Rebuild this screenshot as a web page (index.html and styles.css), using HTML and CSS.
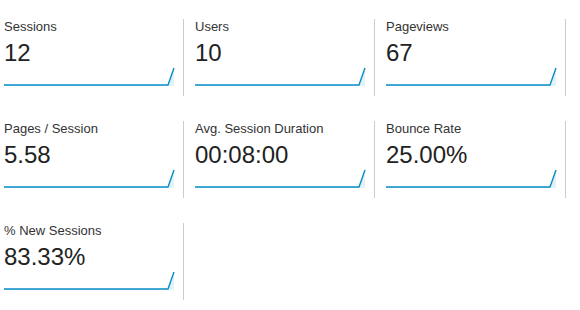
FILE: index.html
```html
<!DOCTYPE html>
<html lang="en">
<head>
    <meta charset="UTF-8">
    <meta name="viewport" content="width=device-width, initial-scale=1.0">
    <title>Audience Overview</title>
    <link rel="stylesheet" href="styles.css">
</head>
<body>
    <div class="metrics">
        <div class="metric">
            <div class="label">Sessions</div>
            <div class="value">12</div>
            <svg class="spark" viewBox="0 0 170 20"><path class="area" d="M0 18 H164 L170 1 V19 H0 Z"/><path class="line" d="M0 18 H164 L170 1"/></svg>
        </div>
        <div class="metric">
            <div class="label">Users</div>
            <div class="value">10</div>
            <svg class="spark" viewBox="0 0 170 20"><path class="area" d="M0 18 H164 L170 1 V19 H0 Z"/><path class="line" d="M0 18 H164 L170 1"/></svg>
        </div>
        <div class="metric">
            <div class="label">Pageviews</div>
            <div class="value">67</div>
            <svg class="spark" viewBox="0 0 170 20"><path class="area" d="M0 18 H164 L170 1 V19 H0 Z"/><path class="line" d="M0 18 H164 L170 1"/></svg>
        </div>
        <div class="metric">
            <div class="label">Pages / Session</div>
            <div class="value">5.58</div>
            <svg class="spark" viewBox="0 0 170 20"><path class="area" d="M0 18 H164 L170 1 V19 H0 Z"/><path class="line" d="M0 18 H164 L170 1"/></svg>
        </div>
        <div class="metric">
            <div class="label">Avg. Session Duration</div>
            <div class="value">00:08:00</div>
            <svg class="spark" viewBox="0 0 170 20"><path class="area" d="M0 18 H164 L170 1 V19 H0 Z"/><path class="line" d="M0 18 H164 L170 1"/></svg>
        </div>
        <div class="metric">
            <div class="label">Bounce Rate</div>
            <div class="value">25.00%</div>
            <svg class="spark" viewBox="0 0 170 20"><path class="area" d="M0 18 H164 L170 1 V19 H0 Z"/><path class="line" d="M0 18 H164 L170 1"/></svg>
        </div>
        <div class="metric">
            <div class="label">% New Sessions</div>
            <div class="value">83.33%</div>
            <svg class="spark" viewBox="0 0 170 20"><path class="area" d="M0 18 H164 L170 1 V19 H0 Z"/><path class="line" d="M0 18 H164 L170 1"/></svg>
        </div>
    </div>
</body>
</html>
```

FILE: styles.css
```css
body {
    margin: 0;
    padding: 19px 0 0 0;
    font-family: "Liberation Sans", Arial, sans-serif;
    color: #222;
    background: #fff;
}
.metrics {
    display: grid;
    grid-template-columns: 184px 191px 191px;
    row-gap: 25px;
}
.metric {
    padding: 0 9px 9px 11px;
    border-right: 1px solid #ccc;
}
.metric:nth-child(3n+1) {
    padding-left: 4px;
}
.label {
    font-size: 13px;
    line-height: 16px;
    color: #333;
    white-space: nowrap;
}
.value {
    margin-top: 4px;
    font-size: 24px;
    line-height: 28px;
    color: #222;
}
.spark {
    display: block;
    width: 170px;
    height: 20px;
    overflow: visible;
}
.spark .area {
    fill: #e3f1f8;
    stroke: none;
}
.spark .line {
    fill: none;
    stroke: #058dc7;
    stroke-width: 1.4;
}
```
